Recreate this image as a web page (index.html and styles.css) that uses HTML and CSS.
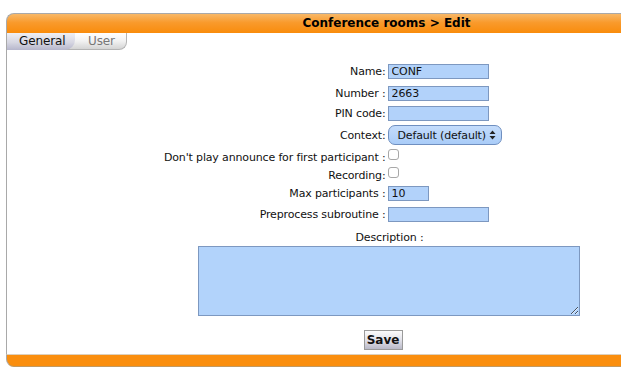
FILE: index.html
```html
<!DOCTYPE html>
<html lang="en">
<head>
  <meta charset="UTF-8" />
  <title>Conference rooms - Edit</title>
  <link rel="stylesheet" href="styles.css">
</head>

<body>
  <!-- Cadre principal -->
  <div class="frame">

    <!-- Titre -->
    <div class="frame-head">Conference rooms &gt; Edit</div>

    <!-- Onglets -->
    <div class="tabs">
      <div class="tab active">General</div>
      <div class="tab">User</div>
    </div>

    <!-- Formulaire -->
    <form class="form">
      <div class="row row-name">
        <label class="lbl">Name:</label>
        <div class="fld"><input class="txt" type="text" value="CONF"></div>
      </div>
      <div class="row row-name">
        <label class="lbl">Number :</label>
        <div class="fld"><input class="txt" type="text" value="2663"></div>
      </div>
      <div class="row row-pin">
        <label class="lbl">PIN code:</label>
        <div class="fld"><input class="txt" type="text" value=""></div>
      </div>
      <div class="row row-select">
        <label class="lbl">Context:</label>
        <div class="fld">
          <div class="select">
            <span>Default (default)</span>
            <svg width="7" height="10" viewBox="0 0 7 10"><path d="M3.5 0.5 L6.5 4 L0.5 4 Z M0.5 6 L6.5 6 L3.5 9.5 Z" fill="#222"/></svg>
          </div>
        </div>
      </div>
      <div class="row row-check">
        <label class="lbl">Don't play announce for first participant :</label>
        <div class="fld"><span class="check"></span></div>
      </div>
      <div class="row row-check">
        <label class="lbl">Recording:</label>
        <div class="fld"><span class="check"></span></div>
      </div>
      <div class="row row-check">
        <label class="lbl">Max participants :</label>
        <div class="fld"><input class="txt short" type="text" value="10"></div>
      </div>
      <div class="row row-sub">
        <label class="lbl">Preprocess subroutine :</label>
        <div class="fld"><input class="txt" type="text" value=""></div>
      </div>

      <div class="desc-label">Description :</div>
      <div class="desc">
        <textarea class="area"></textarea>
      </div>

      <div class="actions">
        <button type="button" class="btn">Save</button>
      </div>
    </form>

    <!-- Pied -->
    <div class="frame-foot"></div>
  </div>
</body>
</html>
```

FILE: styles.css
```css
body {
  margin: 0;
  padding: 0;
  font-family: "DejaVu Sans", Verdana, sans-serif;
  font-size: 11px;
  color: #111;
  background-color: #ffffff;
  overflow: hidden;
}

.frame {
  width: 760px;
  margin: 13px 0 0 6px;
}

.frame-head {
  height: 19px;
  line-height: 19px;
  border-top: 1px solid #a9a9a9;
  border-left: 1px solid #a9a9a9;
  border-top-left-radius: 8px;
  background: linear-gradient(#f8b868, #f99a2c 45%, #f98c0c);
  font-weight: bold;
  font-size: 12px;
  text-align: center;
  color: #000;
}

.tabs {
  display: flex;
  height: 17px;
  border-left: 1px solid #a9a9a9;
  letter-spacing: -0.1px;
}

.tab {
  position: relative;
  margin-left: -10px;
  padding: 0 11px 0 22px;
  line-height: 16px;
  font-size: 12px;
  color: #777;
  background: linear-gradient(#ffffff, #f2f2f2 50%, #d4d4d4);
  border: 1px solid #b4b4b4;
  border-top: none;
  border-bottom-right-radius: 8px;
}

.tab.active {
  z-index: 1;
  width: 45px;
  margin-left: 0;
  padding: 0 11px 0 12px;
  color: #111;
  border: none;
  background: linear-gradient(#efeff4, #d7d7e2 55%, #b6b6cc);
  border-bottom-right-radius: 10px;
}

.form {
  display: flex;
  flex-direction: column;
  height: 294px;
  padding-top: 10px;
  border-left: 1px solid #a9a9a9;
  letter-spacing: -0.15px;
}

.row {
  display: grid;
  grid-template-columns: 1fr 1fr;
  column-gap: 2px;
  align-items: center;
  height: 18px;
}

.row-name {
  height: 22px;
}

.row-select {
  height: 26px;
}

.row-sub {
  height: 21px;
  margin-top: 2px;
}

.lbl {
  text-align: right;
  white-space: nowrap;
}

.fld {
  display: flex;
  align-items: center;
}

.txt {
  box-sizing: border-box;
  width: 101px;
  height: 15px;
  padding: 0 0 0 3px;
  border: 1px solid #7d98c0;
  background-color: #b2d2fa;
  font-family: inherit;
  font-size: 11px;
  letter-spacing: -0.1px;
  color: #111;
}

.txt.short {
  width: 41px;
}

.select {
  box-sizing: border-box;
  display: flex;
  align-items: center;
  justify-content: space-between;
  width: 114px;
  height: 20px;
  padding: 0 5px 0 9px;
  border: 1px solid #6f8fc0;
  border-radius: 7px;
  background: linear-gradient(#c4dcfb, #a9ccf8);
  white-space: nowrap;
}

.check {
  box-sizing: border-box;
  display: inline-block;
  width: 11px;
  height: 11px;
  margin-top: -5px;
  border: 1px solid #a8a8a8;
  border-radius: 3px;
  background-color: #fff;
}

.desc-label {
  height: 16px;
  margin-top: 5px;
  padding-left: 6px;
  line-height: 16px;
  text-align: center;
}

.desc {
  display: flex;
  justify-content: center;
}

.area {
  box-sizing: border-box;
  width: 382px;
  height: 70px;
  margin: 0 0 0 4px;
  border: 1px solid #7d98c0;
  background-color: #b2d3fb;
  resize: both;
}

.actions {
  display: flex;
  justify-content: center;
  margin-top: 14px;
}

.btn {
  box-sizing: border-box;
  width: 39px;
  height: 20px;
  padding: 0;
  margin-right: 7px;
  border: 1px solid #9a9a9a;
  background: linear-gradient(#fbfbfb, #e2e2ea 50%, #b9b9c8);
  font-family: inherit;
  font-size: 12px;
  font-weight: bold;
  color: #111;
}

.frame-foot {
  height: 11px;
  border-left: 1px solid #a9a9a9;
  border-top: 1px solid #ddd0bc;
  border-bottom: 1px solid #c29a62;
  border-bottom-left-radius: 8px;
  background-color: #fa8e0e;
}
```
